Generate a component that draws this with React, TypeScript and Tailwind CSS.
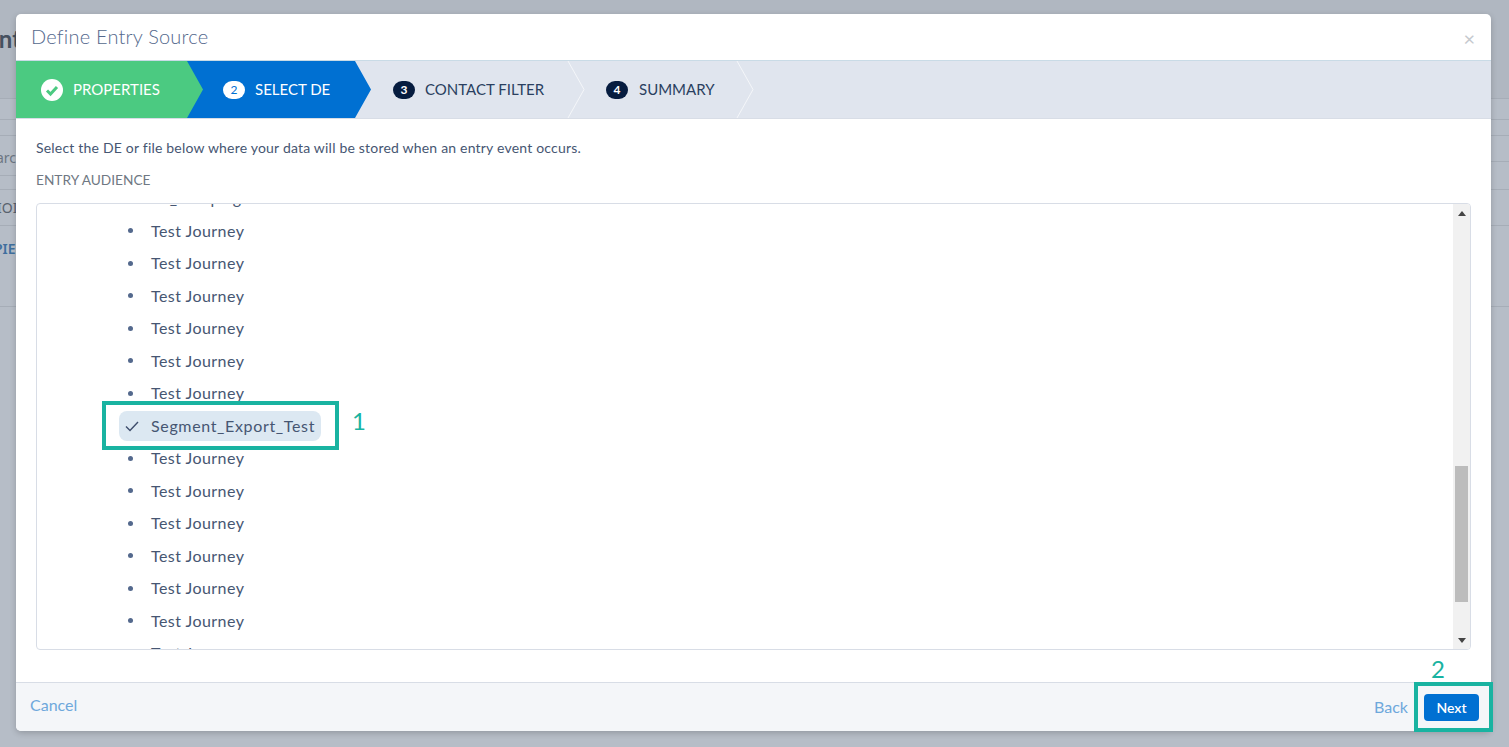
const rows = ['Test Journey', 'Test Journey', 'Test Journey', 'Test Journey', 'Test Journey', 'Test Journey'];
const rowsBelow = ['Test Journey', 'Test Journey', 'Test Journey', 'Test Journey', 'Test Journey', 'Test Journey', 'Test Journey', 'Test Journey'];

const ListRow = ({ label }: { label: string }) => (
  <li className="flex h-[32.5px] shrink-0 items-center pl-[91px]">
    <span className="h-[5px] w-[5px] rounded-full bg-[#54698d]" />
    <span className="ml-[18px] text-[16px] tracking-[0.45px] text-[#465672]">{label}</span>
  </li>
);

const StepBadge = ({ n, className }: { n: number; className: string }) => (
  <span className={`flex h-[18px] w-[22px] items-center justify-center rounded-full text-[12px] font-bold ${className}`}>
    {n}
  </span>
);

const Stepper = () => (
  <div className="relative h-[59px] w-full shrink-0 border-y border-t-[#c9dbe6] border-b-[#d8dde6] bg-[#e0e5ee]">
    <svg className="absolute left-0 top-0 h-[57px] w-[760px]" viewBox="0 0 760 57">
      <path d="M0 0H172L188 28.5L172 57H0Z" fill="#4bca81" />
      <path d="M171 0H339L355 28.5L339 57H171L187 28.5Z" fill="#0070d2" />
      <path d="M552 0L568 28.5L552 57" fill="none" stroke="#f4f6f9" />
      <path d="M721 0L737 28.5L721 57" fill="none" stroke="#f4f6f9" />
    </svg>
    <div className="relative flex h-[57px] items-center text-[15px]">
      <div className="flex w-[207px] items-center pl-[25px] text-white">
        <svg className="h-[22px] w-[22px]" viewBox="0 0 22 22">
          <circle cx="11" cy="11" r="11" fill="#fff" />
          <path d="M6 11.5L9.5 15L16 8" fill="none" stroke="#4bca81" strokeWidth="3" />
        </svg>
        <span className="ml-[10px]">PROPERTIES</span>
      </div>
      <div className="flex w-[170px] items-center text-white">
        <StepBadge n={2} className="bg-white text-[#0070d2] font-normal" />
        <span className="ml-[10px]">SELECT DE</span>
      </div>
      <div className="flex w-[213px] items-center text-[#2a3f60]">
        <StepBadge n={3} className="bg-[#061c3f] text-white" />
        <span className="ml-[10px]">CONTACT FILTER</span>
      </div>
      <div className="flex items-center text-[#2a3f60]">
        <StepBadge n={4} className="bg-[#061c3f] text-white" />
        <span className="ml-[11px]">SUMMARY</span>
      </div>
    </div>
  </div>
);

export default function App() {
  return (
    <div className="relative h-[747px] w-[1509px] overflow-hidden bg-[#b6bdc7] font-['Lato','Noto_Sans',sans-serif]">
      {/* page behind the modal */}
      <div className="absolute left-0 top-0 h-[98px] w-full bg-[#b0b7c1]" />
      <div className="absolute left-0 top-[98px] h-px w-full bg-[#a6adb7]" />
      <div className="absolute left-0 top-[119px] h-px w-full bg-[#a6adb7]" />
      <div className="absolute left-0 top-[135px] h-px w-full bg-[#a6adb7]" />
      <div className="absolute left-0 top-[175px] h-px w-4 bg-[#a6adb7]" />
      <div className="absolute right-0 top-[161px] h-px w-[18px] bg-[#a6adb7]" />
      <div className="absolute left-0 top-[189px] h-px w-full bg-[#a6adb7]" />
      <div className="absolute left-0 top-[225px] h-px w-full bg-[#a6adb7]" />
      <div className="absolute left-0 top-[306px] h-px w-full bg-[#a6adb7]" />
      <span className="absolute -left-[14px] top-[21px] text-[24px] font-bold text-[#465160]">ent</span>
      <span className="absolute -left-[4px] top-[147px] font-['Noto_Sans',sans-serif] text-[14px] text-[#6d7682]">arc</span>
      <span className="absolute -left-[3px] top-[197px] font-['Noto_Sans',sans-serif] text-[14px] text-[#59626e]">IOI</span>
      <span className="absolute -left-[6px] top-[238px] font-['Noto_Sans',sans-serif] text-[14px] font-semibold text-[#3f6f9e]">PIE</span>

      {/* modal */}
      <div className="absolute left-4 top-[14px] flex h-[717px] w-[1475px] flex-col overflow-hidden rounded-[5px] bg-white shadow-[0_2px_6px_rgba(0,0,0,0.2)]">
        <div className="flex h-[46px] shrink-0 items-center justify-between pb-[2px] pl-[15px] pr-[16px]">
          <h1 className="text-[20px] font-light tracking-[0.2px] text-[#54698d]">Define Entry Source</h1>
          <span className="mt-[3px] text-[20px] leading-none text-[#c5c9ce]">×</span>
        </div>
        <Stepper />
        <div className="flex flex-1 flex-col px-5">
          <p className="mt-[21px] text-[14px] leading-[16px] tracking-[0.2px] text-[#465672]">
            Select the DE or file below where your data will be stored when an entry event occurs.
          </p>
          <p className="mt-4 text-[13.7px] leading-[16px] text-[#6f7883]">ENTRY AUDIENCE</p>
          <div className="mt-[15px] flex h-[447px] overflow-hidden rounded-[4px] border border-[#d8dde6]">
            <ul className="flex flex-1 flex-col overflow-hidden pt-0">
              <li className="-mt-[22px] flex h-[32.5px] shrink-0 items-center pl-[114px] text-[16px] tracking-[0.45px] text-[#465672]">
                SF_Campaign
              </li>
              {rows.map((label, i) => (
                <ListRow key={i} label={label} />
              ))}
              <li className="flex h-[32.5px] shrink-0 items-center pl-[82px]">
                <span className="flex h-[30px] items-center rounded-[8px] bg-[#dce8f2] pl-[6px] pr-[6px]">
                  <svg className="h-[14px] w-[14px]" viewBox="0 0 14 14">
                    <path d="M1 7.5L5 11.5L13 3" fill="none" stroke="#3e4d6c" strokeWidth="1.4" />
                  </svg>
                  <span className="ml-[12px] text-[16px] tracking-[0.65px] text-[#465672]">Segment_Export_Test</span>
                </span>
              </li>
              {rowsBelow.map((label, i) => (
                <ListRow key={i} label={label} />
              ))}
            </ul>
            <div className="flex w-[17px] shrink-0 flex-col items-center bg-[#f1f1f1]">
              <span className="mt-[7px] h-0 w-0 border-x-[4px] border-b-[5px] border-x-transparent border-b-[#444]" />
              <div className="mt-[250px] h-[136px] w-[13px] bg-[#bcbcbc]" />
              <span className="mt-[36px] h-0 w-0 border-x-[4px] border-t-[5px] border-x-transparent border-t-[#444]" />
            </div>
          </div>
        </div>
        <div className="flex h-[49px] shrink-0 items-center justify-between border-t border-[#d8dde6] bg-[#f4f6f9] pl-[14px] pr-3">
          <span className="pb-[4px] text-[16px] text-[#6ea8dc]">Cancel</span>
          <div className="flex items-center">
            <span className="pb-[1px] text-[16px] text-[#6ea8dc]">Back</span>
            <button className="ml-4 h-[27px] w-[55px] rounded-[4px] bg-[#0070d2] text-[14px] font-semibold text-white">Next</button>
          </div>
        </div>
      </div>

      {/* annotations */}
      <div className="absolute left-[102px] top-[401px] h-[49px] w-[237px] border-[4px] border-[#19b3a1]" />
      <span className="absolute left-[352px] top-[405px] text-[24px] leading-[32px] text-[#19b3a1]">1</span>
      <div className="absolute left-[1414px] top-[682px] h-[50px] w-[79px] border-[4px] border-[#19b3a1]" />
      <span className="absolute left-[1431px] top-[653px] text-[24px] leading-[32px] text-[#19b3a1]">2</span>
    </div>
  );
}
